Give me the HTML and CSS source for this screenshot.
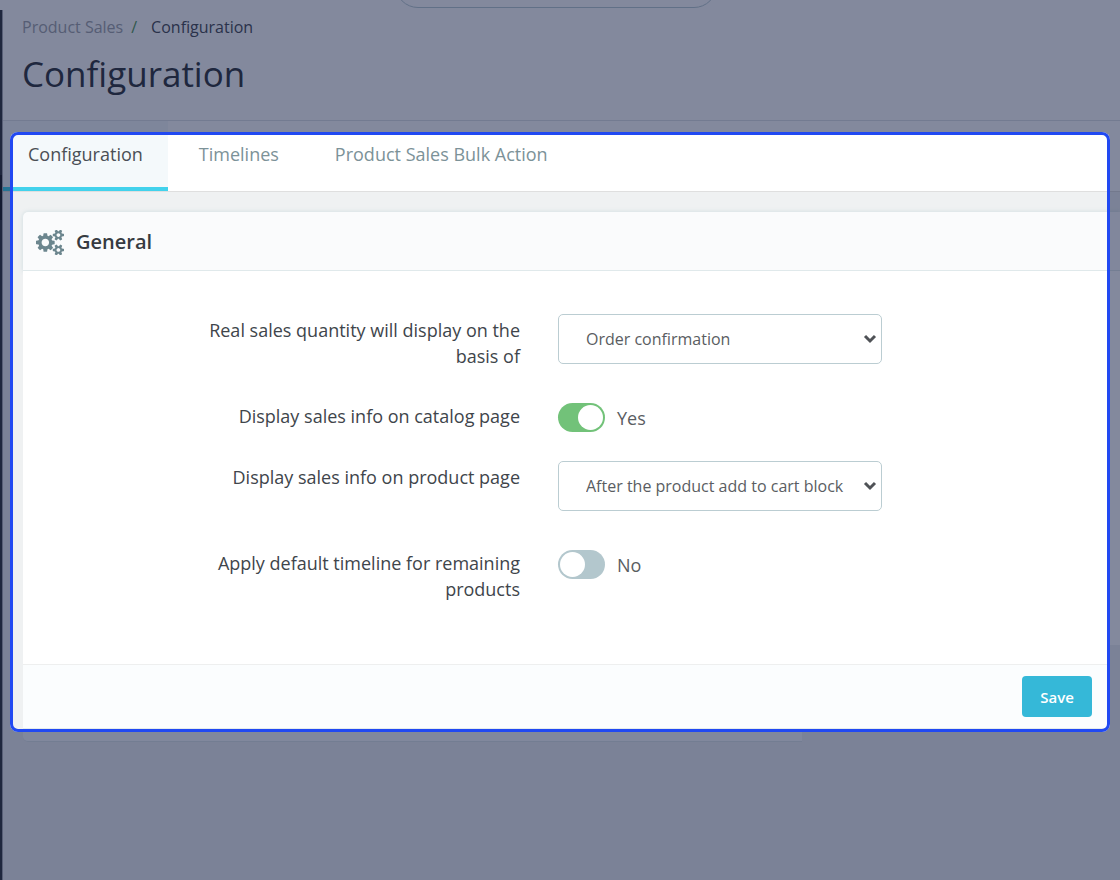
FILE: index.html
```html
<!DOCTYPE html>
<html lang="en">
<head>
<meta charset="utf-8">
<meta name="viewport" content="width=device-width, initial-scale=1">
<title>Configuration</title>
<link rel="stylesheet" href="styles.css">
</head>
<body>
<div class="topbar"><div class="search-pill"></div></div>
<div class="shell">
  <aside class="sidebar"><div class="sidebar-current"></div></aside>
  <main class="main">
    <header class="page-head">
      <nav class="breadcrumb" aria-label="Breadcrumb">
        <a class="crumb" href="#">Product Sales</a>
        <span class="crumb-sep">/</span>
        <a class="crumb crumb-current" href="#">Configuration</a>
      </nav>
      <h1 class="title">Configuration</h1>
    </header>
    <nav class="tabs" aria-label="Sections">
      <a class="tab tab-active" href="#">Configuration</a>
      <a class="tab" href="#">Timelines</a>
      <a class="tab" href="#">Product Sales Bulk Action</a>
    </nav>
    <form class="panel">
      <h2 class="panel-head">
        <svg class="cogs" viewBox="0 -144 1920 1568" aria-hidden="true"><path d="M896 640q0-106-75-181t-181-75-181 75-75 181 75 181 181 75 181-75 75-181zm768 512q0-52-38-90t-90-38-90 38-38 90q0 53 37.5 90.5t90.5 37.5 90.5-37.5 37.5-90.5zm0-1024q0-52-38-90t-90-38-90 38-38 90q0 53 37.5 90.5t90.5 37.5 90.5-37.5 37.5-90.5zm-384 421v185q0 10-7 19.5t-16 10.5l-155 24q-11 35-32 76 34 48 90 115 7 11 7 20 0 12-7 19-23 30-82.5 89.5t-78.5 59.5q-11 0-21-7l-115-90q-37 19-77 31-11 108-23 155-7 24-30 24h-186q-11 0-20-7.5t-10-17.5l-23-153q-34-10-75-31l-118 89q-7 7-20 7-11 0-21-8-144-133-144-160 0-9 7-19 10-14 41-53t47-61q-23-44-35-82l-152-24q-10-1-17-9.5t-7-19.5v-185q0-10 7-19.5t16-10.5l155-24q11-35 32-76-34-48-90-115-7-11-7-20 0-12 7-20 22-30 82-89t79-59q11 0 21 7l115 90q34-18 77-32 11-108 23-154 7-24 30-24h186q11 0 20 7.5t10 17.5l23 153q34 10 75 31l118-89q8-7 20-7 11 0 21 8 144 133 144 160 0 8-7 19-12 16-42 54t-45 60q23 48 34 82l152 23q10 2 17 10.5t7 19.5zm640 533v140q0 16-149 31-12 27-30 52 51 113 51 138 0 4-4 7-122 71-124 71-8 0-46-47t-52-68q-20 2-30 2t-30-2q-14 21-52 68t-46 47q-2 0-124-71-4-3-4-7 0-25 51-138-18-25-30-52-149-15-149-31v-140q0-16 149-31 13-29 30-52-51-113-51-138 0-4 4-7 4-2 35-20t59-34 30-16q8 0 46 46.5t52 67.5q20-2 30-2t30 2q51-71 92-112l6-2q4 0 124 70 4 3 4 7 0 25-51 138 17 23 30 52 149 15 149 31zm0-1024v140q0 16-149 31-12 27-30 52 51 113 51 138 0 4-4 7-122 71-124 71-8 0-46-47t-52-68q-20 2-30 2t-30-2q-14 21-52 68t-46 47q-2 0-124-71-4-3-4-7 0-25 51-138-18-25-30-52-149-15-149-31v-140q0-16 149-31 13-29 30-52-51-113-51-138 0-4 4-7 4-2 35-20t59-34 30-16q8 0 46 46.5t52 67.5q20-2 30-2t30 2q51-71 92-112l6-2q4 0 124 70 4 3 4 7 0 25-51 138 17 23 30 52 149 15 149 31z"/></svg>
        General
      </h2>
      <div class="panel-body">
        <div class="row row-select">
          <label class="label" for="basis">Real sales quantity will display on the basis of</label>
          <div class="select-wrap">
            <select class="select" id="basis"><option>Order confirmation</option></select>
            <svg class="chevron" viewBox="0 0 14 10" aria-hidden="true"><path d="M2 2l5 5 5-5"/></svg>
          </div>
        </div>
        <div class="row">
          <label class="label" for="catalog">Display sales info on catalog page</label>
          <div class="switch-wrap">
            <input class="switch" type="checkbox" role="switch" id="catalog" checked>
            <span class="switch-text">Yes</span>
          </div>
        </div>
        <div class="row row-select">
          <label class="label" for="product">Display sales info on product page</label>
          <div class="select-wrap">
            <select class="select" id="product"><option>After the product add to cart block</option></select>
            <svg class="chevron" viewBox="0 0 14 10" aria-hidden="true"><path d="M2 2l5 5 5-5"/></svg>
          </div>
        </div>
        <div class="row">
          <label class="label" for="remaining">Apply default timeline for remaining products</label>
          <div class="switch-wrap">
            <input class="switch" type="checkbox" role="switch" id="remaining">
            <span class="switch-text">No</span>
          </div>
        </div>
      </div>
      <div class="panel-lower">
        <div class="panel-foot">
          <button class="save" type="button">Save</button>
        </div>
      </div>
      <div class="panel-tail"></div>
    </form>
  </main>
</div>
<div class="spotlight"></div>
</body>
</html>
```
FILE: styles.css
```css
* { box-sizing: border-box; }

body {
  margin: 0;
  min-height: 100vh;
  display: flex;
  flex-direction: column;
  position: relative;
  overflow: hidden;
  background: #eff1f2;
  color: #363a41;
  font-family: "Open Sans", "Noto Sans", sans-serif;
  font-size: 18px;
  line-height: 26px;
}

a { text-decoration: none; }

.topbar {
  height: 10px;
  display: flex;
  align-items: flex-end;
  justify-content: center;
  padding: 0 8px 2px 0;
  overflow: hidden;
  background: #fff;
}

.search-pill {
  flex: none;
  width: 322px;
  height: 46px;
  border: 1px solid #bbcdd2;
  border-radius: 23px;
}

.shell { flex: 1; display: flex; }

.sidebar {
  width: 3px;
  padding-top: 165px;
  background: #363a41;
  border-right: 1px solid #a9abb3;
}

.sidebar-current { height: 45px; background: #202226; }

.main { flex: 1; min-width: 0; }

.page-head {
  padding: 4px 19px 22px;
  background: #fff;
  border-bottom: 1px solid #dfe3e6;
}

.breadcrumb {
  display: flex;
  font-size: 16px;
}

.crumb { color: #a4a7ad; }
.crumb-sep { padding: 0 14px 0 8px; color: #5a9c5c; }
.crumb-current { color: #4d5058; }

.title {
  margin: 10px 0 0;
  font-size: 35px;
  line-height: 48px;
  font-weight: 400;
}

.tabs {
  display: flex;
  gap: 6px;
  background: #fff;
  border-bottom: 1px solid #dfdfdf;
}

.tab {
  padding: 20px 25px;
  border-bottom: 4px solid transparent;
  color: #7c9298;
}

.tab-active {
  background: #f4f9fb;
  border-bottom-color: #42d2ec;
  color: #4a4f55;
}

.panel { margin: 20px 0 0 20px; }

.panel-head {
  display: flex;
  align-items: center;
  gap: 12px;
  margin: 0;
  padding: 17px 13px 15px;
  background: #fafbfc;
  border: 1px solid #e0e9eb;
  border-width: 0 0 1px;
  border-top-left-radius: 5px;
  box-shadow: 0 0 4px rgba(108, 160, 170, 0.25);
  font-size: 20px;
  font-weight: 600;
}

.cogs { width: 28px; height: 25px; fill: #6c868e; }

.panel-body {
  display: grid;
  gap: 29px;
  padding: 43px 238px 43px 168px;
  background: #fff;
}

.row {
  display: grid;
  grid-template-columns: 329fr 324fr;
  column-gap: 38px;
  align-items: start;
}

.row-select { min-height: 60px; }
.row-select .label { padding-top: 3px; }

.label { color: #40454b; text-align: right; }

.select-wrap { display: grid; align-items: center; }

.select {
  grid-area: 1 / 1;
  width: 100%;
  height: 50px;
  padding: 0 27px;
  appearance: none;
  background: #fff;
  border: 1px solid #bbcdd2;
  border-radius: 5px;
  color: #5a5d62;
  font: 16px/24px "Open Sans", "Noto Sans", sans-serif;
}

.chevron {
  grid-area: 1 / 1;
  justify-self: end;
  width: 14px;
  height: 10px;
  margin-right: 5px;
  fill: none;
  stroke: #4f5256;
  stroke-width: 3;
  pointer-events: none;
}

.switch-wrap { display: flex; align-items: center; gap: 12px; height: 29px; }

.switch {
  appearance: none;
  display: flex;
  width: 47px;
  height: 29px;
  margin: 0;
  padding: 2px;
  border-radius: 15px;
  background: #b3c7cd;
}

.switch::before {
  content: "";
  width: 25px;
  height: 25px;
  border-radius: 50%;
  background: #fff;
}

.switch:checked { justify-content: flex-end; background: #72c279; }
.switch-text { color: #5a5d62; }

.panel-lower {
  margin-right: 10px;
  padding-top: 19px;
  background: #fff;
}

.panel-foot {
  display: flex;
  justify-content: flex-end;
  padding: 11px 18px;
  background: #fbfdfe;
  border-top: 1px solid #eeefef;
  border-bottom: 1px solid #e4ebec;
}

.save {
  width: 70px;
  height: 41px;
  border: 0;
  border-radius: 4px;
  background: #35b8d8;
  color: #fff;
  font: 600 15px/24px "Open Sans", "Noto Sans", sans-serif;
}

.panel-tail {
  width: 71%;
  height: 13px;
  background: #fbfdfe;
  border-bottom: 1px solid #dfe7e9;
  border-bottom-left-radius: 5px;
}

/* Guided-tour highlight laid over the page, dimming everything outside it. */
.spotlight {
  position: absolute;
  top: 132px;
  left: 10px;
  right: 10px;
  height: 600px;
  border: 3px solid #2149f2;
  border-radius: 8px;
  box-shadow: 0 0 0 2000px rgba(8, 20, 60, 0.5);
  pointer-events: none;
}
```
